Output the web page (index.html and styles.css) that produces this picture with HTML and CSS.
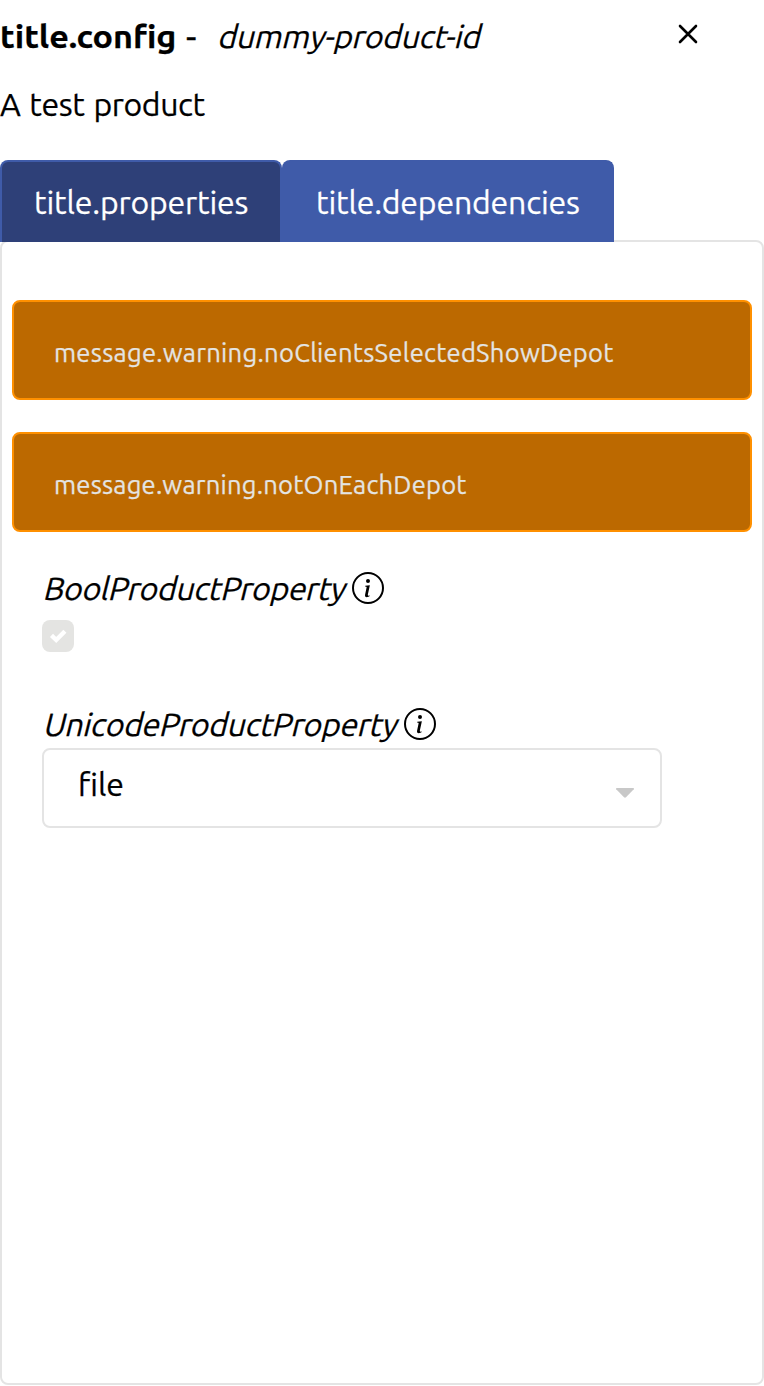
FILE: index.html
```html
<!DOCTYPE html>
<html lang="en">
<head>
<meta charset="utf-8">
<title>title.config</title>
<link rel="stylesheet" href="styles.css">
</head>
<body>
<header class="header">
  <span class="title"><span class="title-text">title.config</span></span><span class="dash">-</span><span class="product-id"><span class="slanted">dummy-product-id</span></span>
  <button class="close" aria-label="close"><svg width="20" height="20" viewBox="0 0 20 20" fill="none" stroke="#000" stroke-width="2.6" stroke-linecap="round"><path d="M2 2l16 16M18 2L2 18"/></svg></button>
</header>
<p class="description"><span>A test product</span></p>
<nav class="tabs">
  <a class="tab tab-active"><span>title.properties</span></a>
  <a class="tab tab-second"><span>title.dependencies</span></a>
</nav>
<main class="panel">
  <div class="alert"><span>message.warning.noClientsSelectedShowDepot</span></div>
  <div class="alert alert-each"><span>message.warning.notOnEachDepot</span></div>
  <section class="property">
    <div class="label"><span class="label-bool"><span class="slanted">BoolProductProperty</span></span>
      <svg class="info" viewBox="0 0 16 16"><path d="M8 15A7 7 0 1 1 8 1a7 7 0 0 1 0 14m0 1A8 8 0 1 0 8 0a8 8 0 0 0 0 16"/><path d="m8.93 6.588-2.29.287-.082.38.45.083c.294.07.352.176.288.469l-.738 3.468c-.194.897.105 1.319.808 1.319.545 0 1.178-.252 1.465-.598l.088-.416c-.2.176-.492.246-.686.246-.275 0-.375-.193-.304-.533zM9 4.5a1 1 0 1 1-2 0 1 1 0 0 1 2 0"/></svg>
    </div>
    <div class="checkbox"><svg width="32" height="32" viewBox="0 0 32 32" fill="none" stroke="#fff" stroke-width="4.4"><path d="M9.5 15.4l4.7 4.6 8.7-8.8"/></svg></div>
  </section>
  <section class="property property-unicode">
    <div class="label"><span class="label-unicode"><span class="slanted">UnicodeProductProperty</span></span>
      <svg class="info" viewBox="0 0 16 16"><path d="M8 15A7 7 0 1 1 8 1a7 7 0 0 1 0 14m0 1A8 8 0 1 0 8 0a8 8 0 0 0 0 16"/><path d="m8.93 6.588-2.29.287-.082.38.45.083c.294.07.352.176.288.469l-.738 3.468c-.194.897.105 1.319.808 1.319.545 0 1.178-.252 1.465-.598l.088-.416c-.2.176-.492.246-.686.246-.275 0-.375-.193-.304-.533zM9 4.5a1 1 0 1 1-2 0 1 1 0 0 1 2 0"/></svg>
    </div>
    <div class="select"><span>file</span><svg class="caret" width="20" height="12" viewBox="0 0 20 12"><path d="M1.6 1h16.8q1 .3.4 1.2L11 10.3q-1 .9-2 0L1.2 2.2Q.6 1.3 1.6 1z" fill="#c8c8c8"/></svg></div>
  </section>
</main>
</body>
</html>
```

FILE: styles.css
```css
* { box-sizing: border-box; }
body {
  margin: 0;
  height: 1386px;
  background: #fff;
  color: #000;
  font-family: Ubuntu, "Noto Sans", sans-serif;
  font-size: 32px;
  -webkit-text-stroke: 0.25px currentColor;
  overflow: hidden;
}
span { white-space: nowrap; }
.slanted { display: inline-block; transform: skewX(-14deg); transform-origin: 0 70%; }
.header { display: flex; height: 72px; line-height: 73px; }
.title { width: 186px; font-weight: 700; }
.title-text { display: inline-block; transform: scaleX(1.065); transform-origin: 0 0; }
.dash { width: 30px; font-size: 36px; -webkit-text-stroke: 0.4px #000; line-height: 71px; }
.product-id { width: 462px; letter-spacing: -0.2px; }
.close { height: 20px; margin-top: 24px; padding: 0; border: 0; background: none; line-height: 0; }
.description { margin: 0 0 25px; height: 63px; line-height: 65px; letter-spacing: -0.38px; word-spacing: 2px; }
.tabs { display: flex; position: relative; z-index: 1; height: 82px; margin-bottom: -2px; }
.tab {
  width: 282px;
  padding-left: 32px;
  border: 2px solid #3f5ba9;
  border-bottom: 0;
  border-radius: 8px 8px 0 0;
  background: #3f5ba9;
  color: #fff;
  line-height: 81px;
  letter-spacing: -0.16px;
}
.tab-active { background: #2e4078; }
.tab-second { width: 332px; }
.panel {
  height: 1145px;
  padding: 58px 10px;
  border: 2px solid #e4e4e4;
  border-radius: 8px;
}
.alert {
  height: 100px;
  margin-bottom: 32px;
  padding: 2px 40px 0;
  border: 2px solid #ff9000;
  border-radius: 8px;
  background: #bc6900;
  color: #e4e4e2;
  font-size: 25.6px;
  letter-spacing: 0.27px;
  line-height: 98px;
}
.alert-each { letter-spacing: 0.22px; }
.property { padding-left: 30px; margin-top: 36px; }
.alert + .property { margin-top: 0; padding-top: 4px; }
.property-unicode { margin-top: 52px; }
.label { display: flex; height: 40px; line-height: 41px; }
.label-bool { width: 310px; padding-left: 1px; letter-spacing: -0.28px; }
.label-unicode { width: 362px; padding-left: 1px; letter-spacing: -0.24px; }
.info { width: 32px; height: 32px; margin-top: 4px; }
.checkbox { width: 32px; height: 32px; margin-top: 12px; border-radius: 8px; background: #e4e4e2; }
.select {
  display: flex;
  justify-content: space-between;
  width: 620px;
  height: 80px;
  margin-top: 4px;
  padding: 0 25px 0 34px;
  border: 2px solid #e4e4e4;
  border-radius: 8px;
  line-height: 69px;
}
.caret { margin-top: 37px; }
```
